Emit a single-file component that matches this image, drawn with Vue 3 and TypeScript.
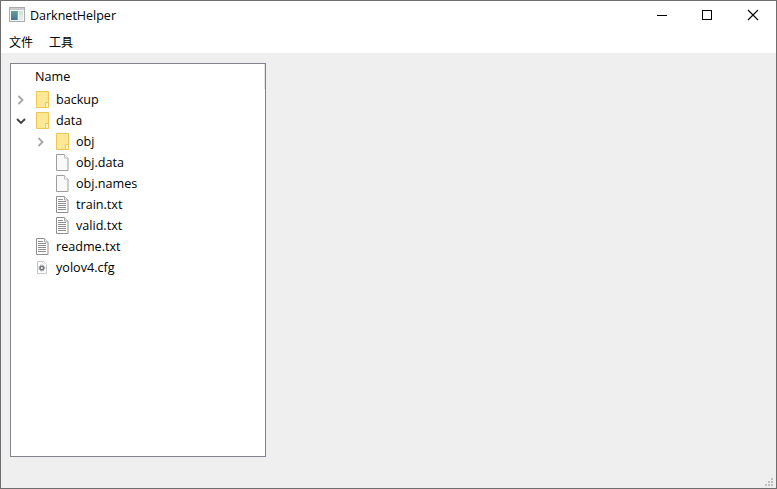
<script setup lang="ts">
type Icon = 'folder' | 'blank' | 'text' | 'cfg'

interface Row {
  name: string
  depth: number
  icon: Icon
  arrow?: 'closed' | 'open'
}

const rows: Row[] = [
  { name: 'backup', depth: 0, icon: 'folder', arrow: 'closed' },
  { name: 'data', depth: 0, icon: 'folder', arrow: 'open' },
  { name: 'obj', depth: 1, icon: 'folder', arrow: 'closed' },
  { name: 'obj.data', depth: 1, icon: 'blank' },
  { name: 'obj.names', depth: 1, icon: 'blank' },
  { name: 'train.txt', depth: 1, icon: 'text' },
  { name: 'valid.txt', depth: 1, icon: 'text' },
  { name: 'readme.txt', depth: 0, icon: 'text' },
  { name: 'yolov4.cfg', depth: 0, icon: 'cfg' },
]
</script>

<template>
  <div class="window">
    <div class="titlebar">
      <svg class="app-icon" width="16" height="16" viewBox="0 0 16 16">
        <defs>
          <linearGradient id="pane" x1="0" y1="0" x2="0" y2="1">
            <stop offset="0" stop-color="#5fa58f" />
            <stop offset="1" stop-color="#4a6f9c" />
          </linearGradient>
        </defs>
        <rect x="0.5" y="0.5" width="15" height="14" fill="#f6f7f7" stroke="#a9abad" />
        <rect x="1" y="1" width="14" height="2" fill="#c9cccd" />
        <rect x="2" y="4" width="6" height="9" fill="url(#pane)" />
        <rect x="8" y="4" width="1" height="9" fill="#8d9a9e" />
        <rect x="10" y="4" width="4" height="4" fill="#cfe3dc" />
        <rect x="10" y="8" width="4" height="5" fill="#e3eaee" />
      </svg>
      <span class="title">DarknetHelper</span>
      <div class="controls">
        <svg class="ctl" width="46" height="28" viewBox="0 0 46 28">
          <path d="M20 14.5h10" stroke="#000" fill="none" />
        </svg>
        <svg class="ctl" width="46" height="28" viewBox="0 0 46 28">
          <rect x="19.5" y="9.5" width="9" height="9" stroke="#000" fill="none" />
        </svg>
        <svg class="ctl" width="46" height="28" viewBox="0 0 46 28">
          <path d="M19 9l10 10M29 9l-10 10" stroke="#000" fill="none" stroke-width="1.1" />
        </svg>
      </div>
    </div>
    <div class="menubar">
      <span>文件</span>
      <span>工具</span>
    </div>
    <div class="content">
      <div class="tree">
        <div class="header">Name</div>
        <div
          v-for="row in rows"
          :key="row.name"
          class="row"
          :class="{ nested: row.depth > 0 }"
        >
          <span class="arrow">
            <svg v-if="row.arrow === 'closed'" width="12" height="10" viewBox="0 0 12 10">
              <path d="M3.5 1l4 4-4 4" stroke="#a6a6a6" stroke-width="1.8" fill="none" />
            </svg>
            <svg v-else-if="row.arrow === 'open'" width="12" height="10" viewBox="0 0 12 10">
              <path d="M2 3l4 4 4-4" stroke="#404040" stroke-width="1.8" fill="none" />
            </svg>
          </span>
          <svg class="file-icon" width="16" height="17" viewBox="0 0 16 17">
            <template v-if="row.icon === 'folder'">
              <path d="M1.5.5h12v16h-12z" fill="#fee795" stroke="#eec655" />
              <path d="M10.5 16.5v-5h3v5z" fill="#fff6cf" stroke="#eec655" />
            </template>
            <template v-else-if="row.icon === 'blank'">
              <path d="M1.5.5h8l3.5 3.5v12.5H1.5z" fill="#f9f9f9" stroke="#9e9e9e" />
              <path d="M9.5.5v3.5H13" fill="#fff" stroke="#bdbdbd" />
            </template>
            <template v-else-if="row.icon === 'text'">
              <path d="M1.5.5h8l3.5 3.5v12.5H1.5z" fill="#fff" stroke="#909090" />
              <path d="M9.5.5v3.5H13" fill="#f0f0f0" stroke="#a8a8a8" />
              <path d="M3 3.5h5M3 5.5h8M3 7.5h8M3 9.5h8M3 11.5h8M3 13.5h8" stroke="#8f8f8f" />
            </template>
            <template v-else>
              <path d="M2.5 2.5h6l3 3v9h-9z" fill="#fdfdfd" stroke="#c8c8c8" />
              <circle cx="6.8" cy="9" r="1.8" fill="none" stroke="#6f7378" stroke-width="1.5" />
              <circle cx="6.8" cy="9" r="3" fill="none" stroke="#8a8e92" stroke-width="1" stroke-dasharray="1.2 1.2" />
            </template>
          </svg>
          <span class="name">{{ row.name }}</span>
        </div>
      </div>
    </div>
    <svg class="grip" width="8" height="8" viewBox="0 0 8 8">
      <path d="M6 0h2v2H6zM3 3h2v2H3zM6 3h2v2H6zM0 6h2v2H0zM3 6h2v2H3zM6 6h2v2H6z" fill="#c0c0c0" />
    </svg>
  </div>
</template>

<style>
html,
body {
  margin: 0;
  overflow: hidden;
}
</style>

<style scoped>
.window {
  position: relative;
  box-sizing: border-box;
  width: 777px;
  height: 489px;
  display: flex;
  flex-direction: column;
  border: 1px solid #6e6e6e;
  background: #efefef;
  font-family: "Open Sans", "Noto Sans CJK SC", sans-serif;
  font-size: 12.6px;
  color: #000;
}
.titlebar {
  height: 28px;
  display: flex;
  align-items: center;
  background: #fff;
  padding-left: 8px;
}
.app-icon { margin-right: 5px; }
.title { font-size: 12.5px; }
.controls { margin-left: auto; display: flex; margin-right: 1px; }
.ctl { display: block; }
.menubar {
  height: 24px;
  display: flex;
  align-items: center;
  gap: 16px;
  padding-left: 8px;
  background: #fff;
  font-family: "Noto Sans CJK SC", sans-serif;
  font-size: 12px;
}
.content { flex: 1; padding: 10px 0 0 9px; }
.tree {
  box-sizing: border-box;
  width: 256px;
  height: 394px;
  border: 1px solid #82828f;
  background: #fff;
}
.header {
  box-sizing: border-box;
  height: 25px;
  padding: 1px 0 0 24px;
  line-height: 24px;
  border-right: 1px solid #e3e3e3;
}
.row { height: 21px; display: flex; align-items: center; padding-left: 4px; }
.row.nested { padding-left: 24px; }
.arrow { width: 12px; height: 10px; margin-right: 8px; display: block; }
.arrow svg { display: block; }
.file-icon { margin-right: 5px; }
.grip { position: absolute; right: 3px; bottom: 2px; }
</style>
